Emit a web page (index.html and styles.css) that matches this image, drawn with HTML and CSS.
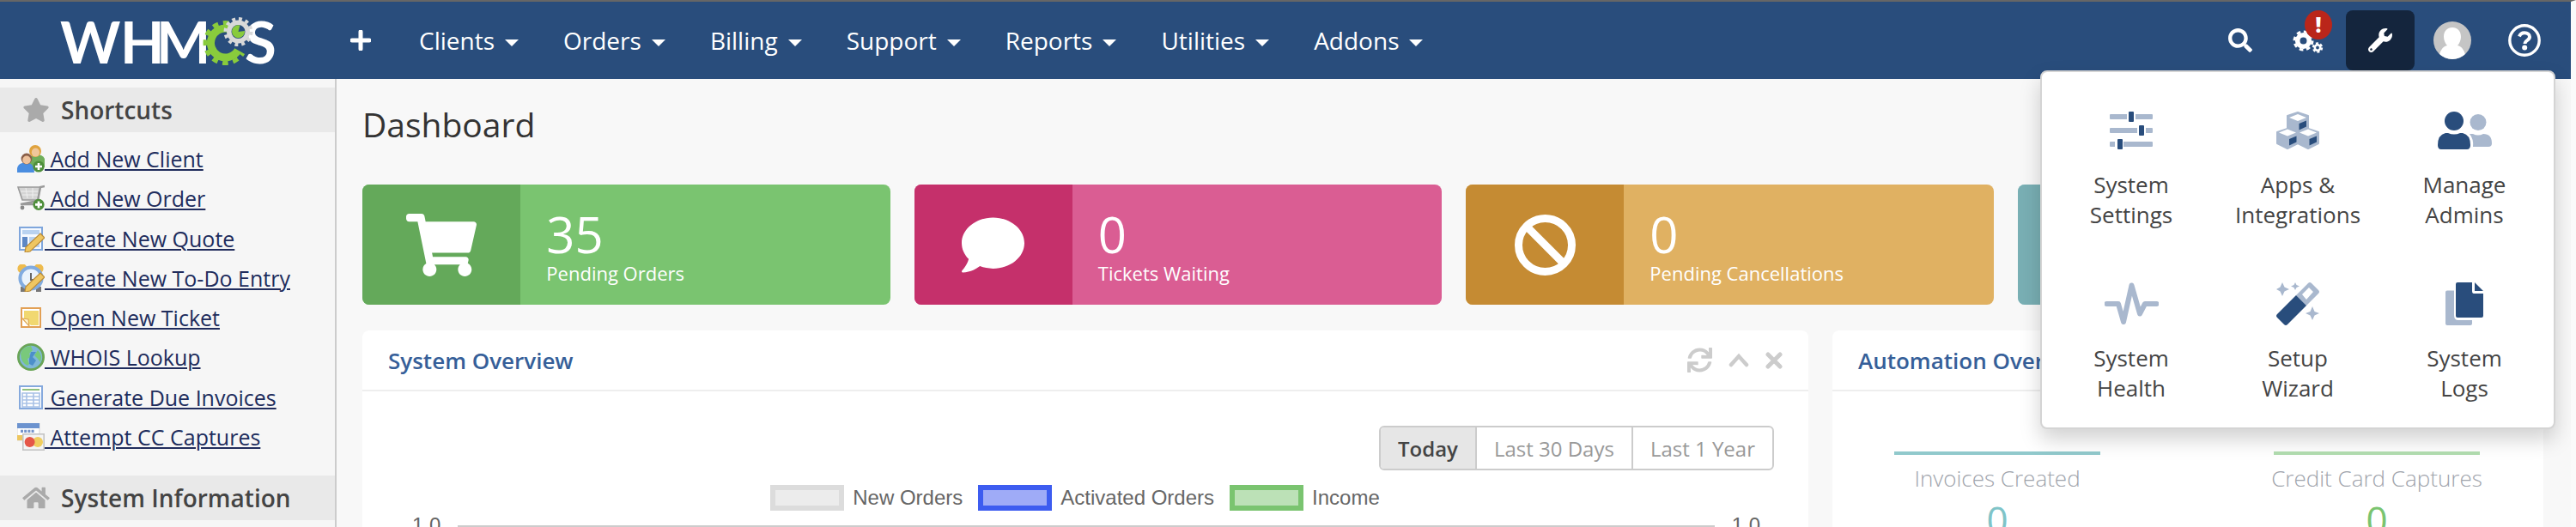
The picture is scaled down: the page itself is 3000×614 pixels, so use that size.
FILE: index.html
```html
<!DOCTYPE html>
<html lang="en">
<head>
<meta charset="utf-8">
<title>WHMCS - Dashboard</title>
<link rel="stylesheet" href="styles.css">
</head>
<body>
<div class="page">
  <header class="navbar">
    <a class="logo" href="#" aria-label="WHMCS">
      <svg width="252" height="86" viewBox="0 -18 252 86">
        <text class="logo-text" x="0 70 112 215" y="52">WHMS</text>
        <g fill="none" stroke="#89cb3c">
          <path d="M207.200 36.500A17 17 0 1 1 198.300 12" stroke-width="9"/>
          <path d="M212.900 39.800A23.500 23.500 0 1 1 196.600 4.900" stroke-width="5" stroke-dasharray="6.500 5.800" stroke-dashoffset="3.250"/>
        </g>
        <circle cx="207.500" cy="15" r="11" fill="#294d7c"/>
        <circle cx="207.500" cy="15" r="10.750" fill="none" stroke="#d9d9d9" stroke-width="5.500"/>
        <circle cx="207.500" cy="15" r="15" fill="none" stroke="#d9d9d9" stroke-width="4" stroke-dasharray="3.930 3.930"/>
        <path d="M207.500 15l2-7.500A7.500 7.500 0 1 0 215 14z" fill="#89cb3c"/>
      </svg>
    </a>
    <nav class="nav">
      <button class="nav-plus" aria-label="Create new"><svg width="24" height="24" viewBox="0 0 24 24"><path d="M12 2v20M2 12h20" stroke="#fff" stroke-width="5" stroke-linecap="round"/></svg></button>
      <a class="nav-link" href="#">Clients<span class="caret"></span></a>
      <a class="nav-link" href="#">Orders<span class="caret"></span></a>
      <a class="nav-link" href="#">Billing<span class="caret"></span></a>
      <a class="nav-link" href="#">Support<span class="caret"></span></a>
      <a class="nav-link" href="#">Reports<span class="caret"></span></a>
      <a class="nav-link" href="#">Utilities<span class="caret"></span></a>
      <a class="nav-link" href="#">Addons<span class="caret"></span></a>
    </nav>
    <div class="tools">
      <button class="tool tool-search" aria-label="Search"><svg width="28" height="28" viewBox="0 0 512 512" fill="#fff"><path d="M505 442.700L405.300 343c-4.500-4.500-10.600-7-17-7H372c27.600-35.300 44-79.700 44-128C416 93.100 322.900 0 208 0S0 93.100 0 208s93.100 208 208 208c48.300 0 92.700-16.400 128-44v16.300c0 6.400 2.500 12.500 7 17l99.700 99.700c9.400 9.400 24.600 9.400 33.900 0l28.300-28.300c9.400-9.400 9.400-24.600.1-34zM208 336c-70.700 0-128-57.200-128-128 0-70.700 57.200-128 128-128 70.700 0 128 57.200 128 128 0 70.700-57.200 128-128 128z"/></svg></button>
      <button class="tool" aria-label="Configuration alerts">
        <svg width="36" height="32" viewBox="0 0 36 32" fill="none" stroke="#fff"><circle cx="12.500" cy="16.500" r="6.800" stroke-width="5.600"/><circle cx="12.500" cy="16.500" r="10.500" stroke-width="3" stroke-dasharray="4.600 3.650"/><circle cx="29" cy="24.500" r="3.200" stroke-width="2.600"/><circle cx="29" cy="24.500" r="5" stroke-width="2.400" stroke-dasharray="2.900 2.340"/></svg>
        <span class="badge">!</span>
      </button>
      <button class="tool tool-active" aria-label="Configuration"><svg width="28" height="28" viewBox="0 0 512 512" fill="#fff"><path d="M507.730 109.100c-2.240-9.030-13.540-12.090-20.120-5.510l-74.360 74.360-67.880-11.310-11.310-67.880 74.360-74.360c6.620-6.620 3.430-17.900-5.660-20.160-47.380-11.740-99.550.91-136.580 37.930-39.640 39.640-50.550 97.100-34.050 147.200L18.740 402.760c-24.990 24.990-24.990 65.510 0 90.500 24.990 24.990 65.510 24.990 90.500 0l213.210-213.210c50.120 16.710 107.470 5.680 147.370-34.220 37.070-37.070 49.700-89.320 37.910-136.730zM64 472c-13.250 0-24-10.750-24-24 0-13.260 10.750-24 24-24s24 10.740 24 24c0 13.250-10.750 24-24 24z"/></svg></button>
      <button class="tool" aria-label="My account"><svg width="44" height="44" viewBox="0 0 44 44"><clipPath id="avatar"><circle cx="22" cy="22" r="22"/></clipPath><g clip-path="url(#avatar)"><path fill="#c5c5c5" d="M0 0h44v44H0z"/><path fill="#fff" d="M22 7c6 0 10 4 10 11 0 4-2 8-4 10 5 1 9 6 10 16H6c1-10 5-15 10-16-2-2-4-6-4-10 0-7 4-11 10-11z"/></g></svg></button>
      <button class="tool" aria-label="Help"><svg width="38" height="38" viewBox="0 0 38 38" fill="none" stroke="#fff"><circle cx="19" cy="19" r="17.200" stroke-width="3.400"/><path d="M13 14.500c1-3 3.500-4.200 6-4.200 3.500 0 6 2 6 4.700 0 4-5.500 4-5.500 8" stroke-width="4"/><circle cx="19.200" cy="27.500" r="3" fill="#fff" stroke="none"/></svg></button>
    </div>

    <div class="menu">
      <a class="menu-item" href="#">
        <svg width="50" height="50" viewBox="0 0 50 50"><path fill="#a9b8ce" d="M1 6h19v6H1q-1 0-1-1V7q0-1 1-1zM30 6h19q1 0 1 1v4q0 1-1 1H30zM1 22h31v6H1q-1 0-1-1v-4q0-1 1-1zM42 22h7q1 0 1 1v4q0 1-1 1h-7zM1 38h5v6H1q-1 0-1-1v-4q0-1 1-1zM16 38h33q1 0 1 1v4q0 1-1 1H16z"/><g fill="#294d7c"><rect x="22" y="3" width="6" height="12" rx="1"/><rect x="34" y="19" width="6" height="12" rx="1"/><rect x="9" y="35" width="6" height="12" rx="1"/></g></svg>
        <span>System<br>Settings</span>
      </a>
      <a class="menu-item" href="#">
        <svg width="50" height="50" viewBox="0 0 50 50"><g fill="#a9b8ce" stroke="#a9b8ce" stroke-width="2" stroke-linejoin="round"><path d="M25 4l12 4v14l-12 5-12-5V8z"/><path d="M13 23l12 4v13l-12 6-12-6V27z"/><path d="M37 23l12 4v13l-12 6-12-6V27z"/></g><path fill="#fff" d="M25 6l10 4-10 4-10-4zM13 23.500l10 4-10 4-10-4zM37 23.500l10 4-10 4-10-4z"/><path fill="#294d7c" d="M26.500 17l8.500-3.500v7l-8.500 4zM15 35l8.500-3.500v7L15 42.500zM38.500 35l8.500-3.500v7l-8.500 4z"/></svg>
        <span>Apps &amp;<br>Integrations</span>
      </a>
      <a class="menu-item" href="#">
        <svg width="63" height="50" viewBox="0 0 63 50"><g fill="#a9b8ce"><circle cx="47" cy="15.500" r="9.500"/><path d="M37 29h4q6 3 12 0 10 0 10 11 0 4-4 4H41q1-9-4-15z"/></g><g fill="#294d7c"><circle cx="19" cy="14" r="11"/><path d="M9 28h3q7 3 14 0h3q9 2 9 14 0 5-4 5H4q-4 0-4-5 0-12 9-14z"/></g></svg>
        <span>Manage<br>Admins</span>
      </a>
      <a class="menu-item" href="#">
        <svg width="63" height="50" viewBox="0 0 63 50" fill="none"><path d="M2.500 25H16l6 21L31.500 3.500 41 36.500 47 25h13.500" stroke="#a9b8ce" stroke-width="6" stroke-linecap="round" stroke-linejoin="round"/></svg>
        <span>System<br>Health</span>
      </a>
      <a class="menu-item" href="#">
        <svg width="50" height="50" viewBox="0 0 50 50"><path fill="#a9b8ce" d="M7 0l2.500 5.500L15 8l-5.500 2.500L7 16 4.500 10.500 0 8l4.500-2.500zM22 0l1.500 3L27 4.500 23.500 6 22 9l-1.500-3L17 4.500 20.500 3zM42 28l2.500 6 5.500 2-5.500 2.500L42 44l-2.500-5.500L34 36l5.500-2z"/><path fill="#a9b8ce" fill-rule="evenodd" d="M37 1q2-2 4 0l8 8q2 2 0 4L35 27 23 15zM38 6l-8 8 5 6 8-9z"/><path fill="#294d7c" d="M23 15l12 12-22 22q-2 2-4 0l-8-8q-2-2 0-4z"/></svg>
        <span>Setup<br>Wizard</span>
      </a>
      <a class="menu-item" href="#">
        <svg width="44" height="50" viewBox="0 0 44 50"><path fill="#a9b8ce" d="M2 9.500h8V38q0 6 5 6h16v4q0 2-2 2H2q-2 0-2-2V11.500q0-2 2-2z"/><path fill="#294d7c" d="M14 0h17v10q0 3 2 3h11v26q0 2-2 2H14q-2 0-2-2V2q0-2 2-2zM34 0l10 10H34z"/></svg>
        <span>System<br>Logs</span>
      </a>
    </div>
  </header>

  <div class="body">
    <aside class="sidebar">
      <h2 class="side-title"><svg width="32" height="28" viewBox="0 0 576 512" fill="#aaa"><path d="M259.300 17.800L194 150.200 47.900 171.500c-26.200 3.800-36.700 36.100-17.700 54.600l105.700 103-25 145.500c-4.500 26.300 23.200 46 46.400 33.700L288 439.600l130.700 68.700c23.200 12.200 50.900-7.400 46.400-33.700l-25-145.500 105.700-103c19-18.500 8.500-50.800-17.700-54.600L382 150.200 316.700 17.800c-11.700-23.600-45.600-23.900-57.400 0z"/></svg>Shortcuts</h2>
      <ul class="shortcuts">
        <li><a href="#"><svg width="32" height="32" viewBox="0 0 16 16"><path fill="#6fae5a" d="M7 13V8q0-2 4-2.500 4 0 5 2.500v5z"/><circle cx="10.500" cy="3.500" r="3.500" fill="#e0a33e"/><ellipse cx="10.700" cy="4.300" rx="2.300" ry="2.500" fill="#f0c79a"/><path fill="#4a8de0" d="M0 16v-2.500Q.5 11 3 10.500h4q3 1 3 5.500z"/><circle cx="5.500" cy="8" r="3.200" fill="#8a5f49"/><ellipse cx="5.500" cy="8.700" rx="2.400" ry="2.400" fill="#eec29c"/><circle cx="12.500" cy="12.500" r="3.300" fill="#4f8f3c"/><path stroke="#fff" stroke-width="1.300" d="M12.500 10.500v4M10.500 12.500h4"/></svg> Add New Client</a></li>
        <li><a href="#"><svg width="32" height="32" viewBox="0 0 16 16"><path fill="#d4d4d4" stroke="#9a9a9a" stroke-width=".8" d="M.5 1.500L3 9h9l1.500-7.500z"/><path stroke="#efefef" stroke-width=".5" d="M2 4h10M3 6h9M5 2l1 6M9 2v6"/><path fill="none" stroke="#9a9a9a" stroke-width="1.200" d="M16 1l-2.500.5L12 9.500 2 11.500h9"/><circle cx="3" cy="13.500" r="1.200" fill="#888"/><circle cx="12.500" cy="11.700" r="3.300" fill="#4f8f3c"/><path stroke="#fff" stroke-width="1.300" d="M12.500 9.700v4M10.500 11.700h4"/></svg> Add New Order</a></li>
        <li><a href="#"><svg width="32" height="32" viewBox="0 0 16 16"><rect x="1.500" y="1.500" width="13" height="13" fill="#f5f9ff" stroke="#7fa6dc"/><path fill="#b9d2f0" d="M3 3h10v2.500H3z"/><path fill="#5d87c5" d="M3 7h3v6H3z"/><path fill="#b9d2f0" d="M7 7h6v6H7z"/><path fill="#efc661" stroke="#b98a36" stroke-width=".6" d="M13.500 5L16 7.500l-8.500 8-3 .5.500-3z"/></svg> Create New Quote</a></li>
        <li><a href="#"><svg width="32" height="32" viewBox="0 0 16 16"><circle cx="3" cy="2.500" r="2.800" fill="#eebb4d"/><circle cx="12.500" cy="2.500" r="2.800" fill="#eebb4d"/><path fill="#777" d="M2 13h3v3H2zM11 13h3v3h-3z"/><circle cx="8" cy="8" r="6.300" fill="#eaf3fc" stroke="#82ace0" stroke-width="2"/><path fill="none" stroke="#666" d="M8 5v4h2"/><path fill="#efc661" stroke="#b98a36" stroke-width=".6" d="M13.500 5L16 7.500l-8.500 8-3 .5.500-3z"/></svg> Create New To-Do Entry</a></li>
        <li><a href="#"><svg width="32" height="32" viewBox="0 0 16 16"><rect x="2.500" y="2.500" width="11" height="11" fill="#fff" stroke="#e2a055"/><path fill="#f1d870" d="M4 4h8.500v8.500H8L4 9z"/><path fill="#fff6d0" stroke="#dfa854" stroke-width=".6" d="M3 8.500l3.500.5.500 4z"/></svg> Open New Ticket</a></li>
        <li><a href="#"><svg width="32" height="32" viewBox="0 0 16 16"><circle cx="8" cy="8" r="7.300" fill="#7fb7d9" stroke="#6aa557" stroke-width="1.400"/><path fill="#79c97b" d="M2 6q1-4 6-4.500L9 4 7 6l1 2-2 1 1 3-1 1Q2 11 2 6zM10 7l2-3q3 3 1.500 7L12 9z"/><path fill="#4c8fca" d="M8 5h3L9 8l2 2-2 3-2-1V9z"/></svg> WHOIS Lookup</a></li>
        <li><a href="#"><svg width="32" height="32" viewBox="0 0 16 16"><rect x="1.500" y="1.500" width="13" height="13" fill="#fff" stroke="#85a9dd"/><path stroke="#8fc07d" d="M3 3.500h10"/><path fill="none" stroke="#a9c2e6" stroke-width=".8" d="M3 5.500h10v8H3zM3 7.500h10M3 9.500h10M3 11.500h10M5.500 5.500v8M9.500 5.500v8"/></svg> Generate Due Invoices</a></li>
        <li><a href="#"><svg width="32" height="32" viewBox="0 0 16 16"><path fill="#fff" stroke="#d5d5d5" stroke-width=".5" d="M0 0h13v10H0z"/><path fill="#6c93cf" d="M0 0h13v3H0z"/><path fill="#edc65f" d="M0 7h4v3H0z"/><path stroke="#7695ca" stroke-width="1.600" stroke-dasharray="1.500 .6" d="M2 4.700h8"/><rect x="3.400" y="6.400" width="12.200" height="9.200" fill="#f4f4f4" stroke="#c3c3c3" stroke-width=".8"/><circle cx="12" cy="11" r="3" fill="#f0cd5f"/><circle cx="7.300" cy="11" r="3" fill="#e55648"/></svg> Attempt CC Captures</a></li>
      </ul>
      <h2 class="side-title"><svg width="32" height="28" viewBox="0 0 576 512" fill="#aaa"><path d="M280.370 148.260L96 300.110V464a16 16 0 0 0 16 16l112.060-.29a16 16 0 0 0 15.920-16V368a16 16 0 0 1 16-16h64a16 16 0 0 1 16 16v95.640a16 16 0 0 0 16 16.050L464 480a16 16 0 0 0 16-16V300L295.670 148.260a12.190 12.190 0 0 0-15.300 0zM571.600 251.470L488 182.560V44.050a12 12 0 0 0-12-12h-56a12 12 0 0 0-12 12v72.610L318.470 43a48 48 0 0 0-61 0L4.340 251.470a12 12 0 0 0-1.600 16.900l25.500 31A12 12 0 0 0 45.150 301l235.220-193.740a12.190 12.190 0 0 1 15.300 0L530.900 301a12 12 0 0 0 16.900-1.600l25.500-31a12 12 0 0 0-1.700-16.930z"/></svg>System Information</h2>
    </aside>

    <main class="main">
      <h1 class="title">Dashboard</h1>
      <div class="cards">
        <a class="card card-green" href="#">
          <span class="card-icon"><svg width="82" height="73" viewBox="0 0 576 512" fill="#fff"><path d="M528.120 301.319l47.273-208C578.806 78.301 567.391 64 551.990 64H159.208l-9.166-44.810C147.758 8.021 137.930 0 126.529 0H24C10.745 0 0 10.745 0 24v16c0 13.255 10.745 24 24 24h69.883l70.248 343.435C147.325 417.100 136 435.222 136 456c0 30.928 25.072 56 56 56s56-25.072 56-56c0-15.674-6.447-29.835-16.824-40h209.647C430.447 426.165 424 440.326 424 456c0 30.928 25.072 56 56 56s56-25.072 56-56c0-22.172-12.888-41.332-31.579-50.405l5.517-24.276c3.413-15.018-8.002-29.319-23.403-29.319H218.117l-6.545-32h293.145c11.206 0 20.920-7.754 23.403-18.681z"/></svg></span>
          <span class="card-text"><span class="card-num">35</span><span class="card-label">Pending Orders</span></span>
        </a>
        <a class="card card-pink" href="#">
          <span class="card-icon"><svg width="73" height="73" viewBox="0 0 512 512" fill="#fff"><path d="M256 32C114.600 32 0 125.100 0 240c0 49.600 21.400 95 57 130.700C44.500 421.100 2.700 466 2.200 466.500c-2.200 2.300-2.800 5.700-1.500 8.700S4.800 480 8 480c66.300 0 116-31.800 140.600-51.400 32.700 12.300 69 19.400 107.400 19.400 141.400 0 256-93.100 256-208S397.400 32 256 32z"/></svg></span>
          <span class="card-text"><span class="card-num">0</span><span class="card-label">Tickets Waiting</span></span>
        </a>
        <a class="card card-orange" href="#">
          <span class="card-icon"><svg width="73" height="73" viewBox="0 0 73 73" fill="none" stroke="#fff" stroke-width="9"><circle cx="36.500" cy="36.500" r="31"/><path d="M15 15l43 43"/></svg></span>
          <span class="card-text"><span class="card-num">0</span><span class="card-label">Pending Cancellations</span></span>
        </a>
        <a class="card card-teal" href="#" aria-label="Pending module actions">
          <span class="card-icon"></span>
          <span class="card-text"></span>
        </a>
      </div>

      <div class="panels">
        <section class="panel panel-wide">
          <div class="panel-head">
            <h3 class="panel-title">System Overview</h3>
            <div class="panel-tools">
              <button aria-label="Refresh"><svg width="29" height="29" viewBox="0 0 512 512" fill="#ccc"><path d="M440.650 12.570l4 82.770A247.160 247.160 0 0 0 255.830 8C134.730 8 33.910 94.920 12.290 209.820A12 12 0 0 0 24.090 224h49.050a12 12 0 0 0 11.670-9.260 175.910 175.910 0 0 1 317-56.940l-101.460-4.860a12 12 0 0 0-12.570 12v47.410a12 12 0 0 0 12 12H500a12 12 0 0 0 12-12V12a12 12 0 0 0-12-12h-47.370a12 12 0 0 0-11.980 12.570zM255.830 432a175.610 175.610 0 0 1-146-77.800l101.800 4.870a12 12 0 0 0 12.570-12v-47.400a12 12 0 0 0-12-12H12a12 12 0 0 0-12 12V500a12 12 0 0 0 12 12h47.350a12 12 0 0 0 12-12.600l-4.150-82.570A247.170 247.170 0 0 0 255.830 504c121.110 0 221.930-86.920 243.550-201.820a12 12 0 0 0-11.800-14.180h-49.050a12 12 0 0 0-11.670 9.260A175.860 175.860 0 0 1 255.830 432z"/></svg></button>
              <button aria-label="Collapse"><svg width="24" height="20" viewBox="0 0 24 20" fill="none"><path d="M3 15l9-10 9 10" stroke="#ccc" stroke-width="4.500" stroke-linecap="round"/></svg></button>
              <button aria-label="Close"><svg width="20" height="20" viewBox="0 0 20 20" fill="none"><path d="M3 3l14 14M17 3L3 17" stroke="#ccc" stroke-width="5" stroke-linecap="round"/></svg></button>
            </div>
          </div>
          <div class="panel-body">
            <div class="range">
              <button class="range-btn range-on">Today</button><button class="range-btn">Last 30 Days</button><button class="range-btn">Last 1 Year</button>
            </div>
            <div class="legend">
              <span class="key key-new">New Orders</span>
              <span class="key key-active">Activated Orders</span>
              <span class="key key-income">Income</span>
            </div>
            <div class="chart">
              <span class="axis">1.0</span>
              <div class="plot"><i></i><i></i><i></i></div>
              <span class="axis">1.0</span>
            </div>
          </div>
        </section>
        <section class="panel">
          <div class="panel-head"><h3 class="panel-title">Automation Overview</h3></div>
          <div class="stats">
            <div class="stat stat-teal"><span class="stat-bar"></span><span class="stat-label">Invoices Created</span><span class="stat-num">0</span></div>
            <div class="stat stat-green"><span class="stat-bar"></span><span class="stat-label">Credit Card Captures</span><span class="stat-num">0</span></div>
          </div>
        </section>
      </div>
    </main>
  </div>
</div>
</body>
</html>
```
FILE: styles.css
```css
*, *::before { box-sizing: border-box; }
body {
  margin: 0;
  background: #f8f8f8;
  color: #333;
  font-family: "Open Sans", "Noto Sans", sans-serif;
  font-size: 26px;
}
a { color: inherit; text-decoration: none; }
button { margin: 0; padding: 0; border: 0; background: none; font: inherit; color: inherit; }
svg { display: block; }
h1, h2, h3, ul { margin: 0; padding: 0; }

.page {
  height: 100vh;
  overflow: hidden;
  display: flex;
  flex-direction: column;
  border-top: 2px solid #666;
  border-right: 6px solid #fafafa;
}

/* Top bar */
.navbar {
  position: relative;
  z-index: 2;
  flex: none;
  display: flex;
  height: 90px;
  background: #294d7c;
  color: #fff;
}
.logo { flex: none; width: 392px; padding: 2px 0 0 70px; }
.logo-text { font-family: Lato, sans-serif; font-weight: 700; font-size: 67px; fill: #fff; }
.nav { display: flex; align-items: center; font-size: 28px; }
.nav-plus { padding: 0 30px 0 16px; }
.nav-link { display: flex; align-items: center; padding: 0 26px; }
.caret {
  margin: 6px 0 0 12px;
  border: 8px solid transparent;
  border-top-color: #fff;
  border-bottom: 0;
}
.tools { display: flex; gap: 4px; margin-left: auto; padding: 10px 14px 10px 0; }
.tool {
  position: relative;
  display: flex;
  align-items: center;
  justify-content: center;
  width: 80px;
  height: 70px;
  border-radius: 8px;
}
.tool-search { padding-left: 10px; }
.tool-active { background: #14253d; }
.badge {
  position: absolute;
  top: 0;
  left: 36px;
  width: 32px;
  height: 34px;
  border-radius: 50%;
  background: #ba261a;
  font-size: 24px;
  line-height: 34px;
  font-weight: 800;
  text-align: center;
}

/* Configuration menu */
.menu {
  position: absolute;
  top: 80px;
  right: 18px;
  width: 600px;
  padding: 43px 7px 28px;
  display: grid;
  grid-template-columns: repeat(3, 1fr);
  row-gap: 61px;
  background: #fff;
  border: 2px solid #d4d4d4;
  border-radius: 8px;
  box-shadow: 0 12px 24px rgba(0, 0, 0, .18);
  color: #444;
}
.menu-item {
  display: flex;
  flex-direction: column;
  align-items: center;
  gap: 21px;
  line-height: 35px;
  text-align: center;
}

.body { flex: 1; display: flex; min-height: 0; }

/* Sidebar */
.sidebar {
  flex: none;
  width: 392px;
  padding-top: 10px;
  background: #f6f6f6;
  border-right: 2px solid #ccc;
}
.side-title {
  display: flex;
  align-items: center;
  gap: 13px;
  height: 52px;
  padding-left: 26px;
  background: #e9e9e9;
  color: #444;
  font-size: 28px;
  font-weight: 600;
}
.shortcuts {
  display: flex;
  flex-direction: column;
  justify-content: space-between;
  height: 400px;
  padding: 8px 20px 22px;
  list-style: none;
  font-size: 25px;
  line-height: 46px;
  color: #202c5c;
}
.shortcuts a { text-decoration: underline; text-decoration-thickness: 2px; text-underline-offset: 2px; }
.shortcuts svg { display: inline-block; vertical-align: -6px; }

/* Main column */
.main { flex: 1; min-width: 0; padding: 23px 30px 0; }
.title { font-size: 39px; font-weight: 400; line-height: 60px; }
.cards { display: grid; grid-template-columns: repeat(4, 1fr); gap: 28px; margin-top: 40px; }
.card { display: flex; height: 140px; border-radius: 8px; overflow: hidden; color: #fff; }
.card-icon { flex: none; width: 30%; display: flex; align-items: center; justify-content: center; }
.card-text { display: flex; flex-direction: column; padding: 28px 30px; }
.card-num { font-size: 58px; line-height: 60px; }
.card-label { font-size: 22px; line-height: 30px; }
.card-green { background: #7ac470; }
.card-green .card-icon { background: #64a95a; }
.card-pink { background: #da5d93; }
.card-pink .card-icon { background: #c5306b; }
.card-orange { background: #e0b162; }
.card-orange .card-icon { background: #c58b33; }
.card-teal { background: #98cdd0; }
.card-teal .card-icon { background: #79afb4; }

.panels { display: grid; grid-template-columns: repeat(3, 1fr); gap: 28px; margin: 30px 2px 0 0; }
.panel { background: #fff; border-radius: 8px 8px 0 0; }
.panel-wide { grid-column: span 2; }
.panel-head {
  display: flex;
  align-items: center;
  justify-content: space-between;
  height: 71px;
  padding: 0 30px;
  border-bottom: 2px solid #eee;
}
.panel-title { color: #365f99; font-size: 26px; font-weight: 600; }
.panel-tools { display: flex; align-items: center; gap: 19px; }
.panel-body { padding: 40px; }
.range { display: flex; width: max-content; margin-left: auto; border: 2px solid #ccc; border-radius: 6px; overflow: hidden; }
.range-btn { height: 48px; padding: 0 20px; font-size: 24px; color: #999; }
.range-btn + .range-btn { border-left: 2px solid #ccc; }
.range-on { background: #e6e6e6; color: #444; font-weight: 600; }
.legend {
  display: flex;
  justify-content: center;
  gap: 18px;
  margin-top: 17px;
  padding-right: 24px;
  font: 24px/30px "Liberation Sans", Arial, sans-serif;
  color: #666;
}
.key { display: flex; gap: 10px; }
.key::before { content: ""; width: 86px; height: 30px; border: 6px solid; }
.key-new::before { background: #ececec; border-color: #dcdcdc; }
.key-active::before { background: #9fabf7; border-color: #3d5cf0; }
.key-income::before { background: #bce1b7; border-color: #7ac470; }
.chart {
  display: flex;
  align-items: flex-start;
  padding: 3px 16px 0 18px;
  font: 24px/28px "Liberation Sans", Arial, sans-serif;
  color: #666;
}
.plot {
  flex: 1;
  display: grid;
  grid-template-columns: repeat(3, 1fr);
  height: 300px;
  margin: 14px 20px 0;
  border-top: 2px solid #ccc;
}
.plot i { border-left: 2px solid #ddd; }

.stats { display: flex; justify-content: space-between; padding: 70px 72px 70px 70px; }
.stat { display: flex; flex-direction: column; align-items: center; width: 244px; white-space: nowrap; font-weight: 300; }
.stat-bar { width: 240px; height: 4px; }
.stat-label { margin-top: 9px; line-height: 36px; color: #a0a4ac; }
.stat-num { font-size: 44px; line-height: 60px; font-weight: 400; }
.stat-teal .stat-bar { background: #91c9cc; }
.stat-teal .stat-num { color: #7fc4c8; }
.stat-green .stat-bar { background: #b2ddb0; }
.stat-green .stat-num { color: #7ac470; }
```
